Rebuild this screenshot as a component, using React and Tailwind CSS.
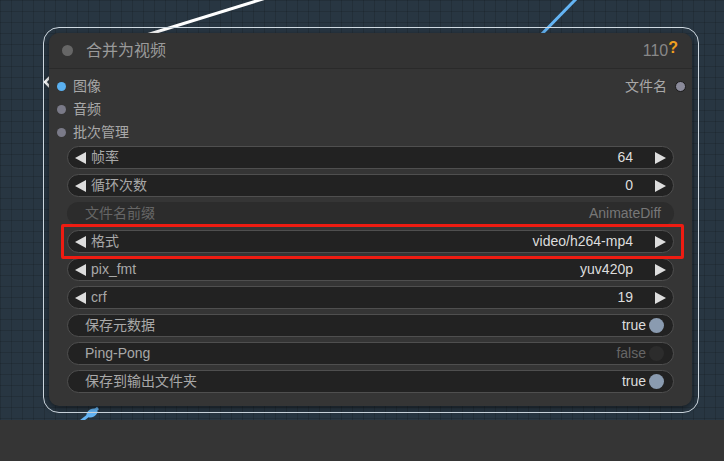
import React from 'react';

const font = "font-['Liberation_Sans','Noto_Sans_CJK_SC',sans-serif]";

const ArrowLeft = () => (
  <svg width="11" height="12" viewBox="0 0 11 12" className="shrink-0">
    <path d="M0 6 L11 0 L11 12 Z" fill="#dddddd" />
  </svg>
);

const ArrowRight = () => (
  <svg width="11" height="12" viewBox="0 0 11 12" className="shrink-0">
    <path d="M11 6 L0 0 L0 12 Z" fill="#dddddd" />
  </svg>
);

const NumberWidget = ({ label, value }) => (
  <div className="h-[23px] rounded-full bg-[#222] border border-[#4f4f4f] flex items-center pl-[7px] pr-[7px]">
    <ArrowLeft />
    <span className="ml-[5px] text-[#a8a8a8]">{label}</span>
    <span className="ml-auto text-[#dddddd]">{value}</span>
    <span className="ml-[22px]"><ArrowRight /></span>
  </div>
);

const ToggleWidget = ({ label, on }) => (
  <div className="h-[23px] rounded-full bg-[#222] border border-[#4f4f4f] flex items-center pl-[17px] pr-[9px]">
    <span className="text-[#a8a8a8]">{label}</span>
    <span className={`ml-auto ${on ? 'text-[#dddddd]' : 'text-[#666]'}`}>{on ? 'true' : 'false'}</span>
    <span className={`ml-[3px] w-[15px] h-[15px] rounded-full ${on ? 'bg-[#8a9bb0]' : 'bg-[#2c2c2c]'}`} />
  </div>
);

const InputRow = ({ color, label }) => (
  <div className="h-[23px] flex items-center">
    <span className="w-[9px] h-[9px] rounded-full ml-[8px]" style={{ background: color }} />
    <span className="ml-[7px] text-[#a8a8a8]">{label}</span>
  </div>
);

export default function App() {
  return (
    <div className={`w-[724px] h-[461px] overflow-hidden bg-[#353535] text-[14px] ${font}`}>
      <div className="relative h-[420px] bg-[#283642] bg-[linear-gradient(rgba(0,0,0,0.13)_1px,transparent_1px),linear-gradient(90deg,rgba(0,0,0,0.13)_1px,transparent_1px)] bg-[size:11px_11px] overflow-hidden">
        {/* links */}
        <svg className="absolute inset-0" width="724" height="420">
          <line x1="140" y1="37" x2="266" y2="-2" stroke="#ffffff" strokeWidth="3" />
          <line x1="536" y1="40" x2="577" y2="-2" stroke="#64b4f4" strokeWidth="3" />
          <path d="M50 77 L45 82 L50 87" fill="none" stroke="#ffffff" strokeWidth="2.5" />
          <line x1="98" y1="408" x2="80" y2="422" stroke="#64b4f4" strokeWidth="3" />
          <ellipse cx="92" cy="413" rx="6" ry="4" fill="#64b4f4" transform="rotate(-30 92 413)" />
        </svg>

        {/* selection outline */}
        <div className="absolute left-[43px] top-[27px] w-[656px] h-[386px] rounded-[16px] border border-[#d0dae2]" />

        {/* node */}
        <div className="absolute left-[49px] top-[33px] w-[643px] h-[373px] rounded-[10px] bg-[#353535] shadow-[0_2px_6px_rgba(0,0,0,0.5)] flex flex-col">
          <div className="h-[36px] rounded-t-[10px] bg-[#333333] border-b border-[#2a2a2a] flex items-center pl-[13px] pr-[14px]">
            <span className="w-[11px] h-[11px] rounded-full bg-[#666]" />
            <span className="ml-[13px] text-[16px] text-[#9a9a9a]">合并为视频</span>
            <span className="ml-auto text-[16px] text-[#888]">110</span>
            <span className="text-[16px] font-bold text-[#f0a020] -mt-[6px]">?</span>
          </div>

          <div className="relative pt-[6px]">
            <InputRow color="#5ab0f0" label="图像" />
            <InputRow color="#7a7a88" label="音频" />
            <InputRow color="#7a7a88" label="批次管理" />
            <div className="absolute right-[6px] top-[6px] h-[23px] flex items-center">
              <span className="text-[#a8a8a8]">文件名</span>
              <span className="ml-[8px] w-[11px] h-[11px] rounded-full bg-[#8a8a9a] border border-[#1a1a1a]" />
            </div>
          </div>

          <div className="mt-[2px] px-[18px] flex flex-col gap-[5px]">
            <NumberWidget label="帧率" value="64" />
            <NumberWidget label="循环次数" value="0" />
            <div className="h-[23px] rounded-full bg-[#2c2c2c] flex items-center pl-[18px] pr-[13px]">
              <span className="text-[#666]">文件名前缀</span>
              <span className="ml-auto text-[#777]">AnimateDiff</span>
            </div>
            <NumberWidget label="格式" value="video/h264-mp4" />
            <NumberWidget label="pix_fmt" value="yuv420p" />
            <NumberWidget label="crf" value="19" />
            <ToggleWidget label="保存元数据" on />
            <ToggleWidget label="Ping-Pong" on={false} />
            <ToggleWidget label="保存到输出文件夹" on />
          </div>
        </div>

        {/* highlight */}
        <div className="absolute left-[61px] top-[224px] w-[623px] h-[35px] border-[3px] border-[#ee1c12] rounded-[2px]" />
      </div>
    </div>
  );
}
